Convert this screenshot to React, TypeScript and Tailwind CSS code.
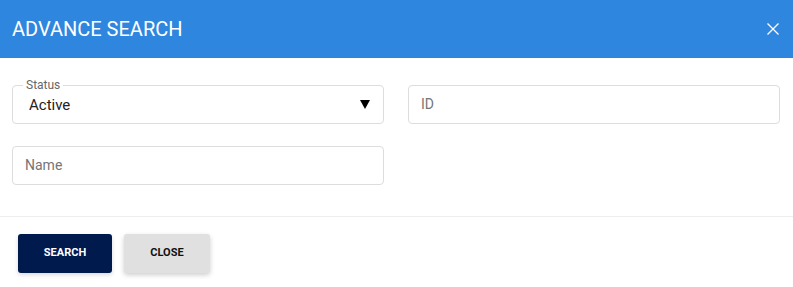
export default function App() {
  return (
    <div className="w-[793px] h-[287px] bg-white font-['Roboto',sans-serif] overflow-hidden">
      <div className="h-[58px] bg-[#2e86de] flex items-center justify-between pl-3 pr-[14px]">
        <h1 className="text-white text-[20px] leading-none pb-[1px]">ADVANCE SEARCH</h1>
        <button className="text-white">
          <svg width="12" height="12" viewBox="0 0 12 12" stroke="currentColor" strokeWidth="1.3" fill="none">
            <path d="M0.5 0.5L11.5 11.5M11.5 0.5L0.5 11.5" />
          </svg>
        </button>
      </div>

      <div className="grid grid-cols-2 gap-x-6 gap-y-[22px] px-3 pt-[27px] pb-[31px] pr-[13px] border-b border-[#eeeeee]">
        <div className="relative h-[39px] border border-[#dddddd] rounded-[4px] flex items-center pl-4 pr-3">
          <span className="absolute -top-[9px] left-[10px] bg-white px-[3px] text-[12px] leading-4 text-[#666666]">Status</span>
          <span className="flex-1 text-[15px] text-[#222222] pt-[1px]">Active</span>
          <svg width="10" height="9" viewBox="0 0 10 9" className="mr-[1px]">
            <polygon points="0,0 10,0 5,9" fill="#000" />
          </svg>
        </div>
        <div className="h-[39px] border border-[#dddddd] rounded-[4px] flex items-center px-3">
          <span className="text-[14px] text-[#757575]">ID</span>
        </div>
        <div className="h-[39px] border border-[#dddddd] rounded-[4px] flex items-center px-3">
          <span className="text-[14px] text-[#757575]">Name</span>
        </div>
      </div>

      <div className="flex gap-3 pl-[18px] pt-[17px]">
        <button className="w-[94px] h-[39px] bg-[#011a4e] text-white text-[11px] font-bold rounded-[3px] shadow-[0_2px_4px_rgba(0,0,0,0.15)]">
          SEARCH
        </button>
        <button className="w-[86px] h-[39px] bg-[#e0e0e0] text-[#111111] text-[11px] font-bold rounded-[3px] shadow-[0_2px_5px_rgba(0,0,0,0.2)]">
          CLOSE
        </button>
      </div>
    </div>
  );
}
